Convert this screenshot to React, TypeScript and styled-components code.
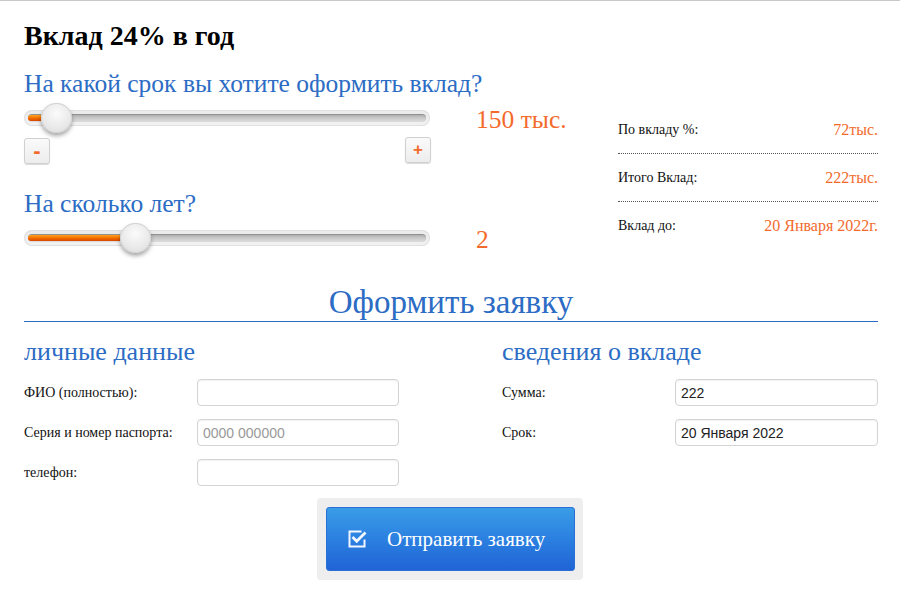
import React from "react";
import styled, { createGlobalStyle } from "styled-components";

const SERIF = `"Liberation Serif", "Times New Roman", serif`;
const SANS = `"Liberation Sans", Arial, sans-serif`;

const Global = createGlobalStyle`
  html, body { margin: 0; padding: 0; background: #fff; }
  body { font-family: ${SERIF}; color: #111; }
  * { box-sizing: border-box; }
`;

const BLUE = "#2c6cc4";
const ORANGE = "#f36a2c";

const Page = styled.div`
  width: 900px;
  height: 600px;
  border-top: 1px solid #c9c9c9;
  padding: 0 22px 0 24px;
  overflow: hidden;
`;

const Title = styled.h1`
  margin: 19px 0 0;
  font-size: 28px;
  line-height: 32px;
  font-weight: bold;
  color: #000;
`;

const Top = styled.div`
  display: flex;
  align-items: flex-start;
`;

const Calc = styled.div`
  flex: 1;
`;

const Question = styled.h2<{ $mt: number }>`
  margin: ${(p) => p.$mt}px 0 0;
  font-size: 25.5px;
  line-height: 30px;
  font-weight: normal;
  color: ${BLUE};
`;

const SliderRow = styled.div`
  display: flex;
  align-items: center;
  height: 34px;
  margin-top: 2px;
`;

const Track = styled.div`
  position: relative;
  width: 406px;
  height: 16px;
  border-radius: 8px;
  background: linear-gradient(#e9e9e9, #f3f3f3);
  box-shadow: inset 0 0 0 1px #e0e0e0;
`;

const Groove = styled.div`
  position: absolute;
  left: 4px;
  right: 4px;
  top: 4px;
  height: 8px;
  border-radius: 4px;
  background: linear-gradient(#adadad, #cdcdcd 60%, #dddddd);
  box-shadow: inset 0 1px 1px rgba(0, 0, 0, 0.2);
`;

const Fill = styled.div`
  position: absolute;
  left: 4px;
  top: 5px;
  height: 6px;
  border-radius: 3px;
  background: linear-gradient(#ffa51c, #f36a00 55%, #d64800);
`;

const Thumb = styled.div`
  position: absolute;
  top: -7px;
  width: 31px;
  height: 30px;
  margin-left: -15px;
  border-radius: 50%;
  background: radial-gradient(circle at 50% 35%, #fbfbfb, #e8e8e8 60%, #d8d8d8);
  box-shadow: 0 3px 4px rgba(0, 0, 0, 0.35), inset 0 0 0 1px #d2d2d2;
`;

const Value = styled.div`
  margin: 3px 0 0 46px;
  font-size: 25.5px;
  line-height: 30px;
  color: ${ORANGE};
`;

const StepRow = styled.div`
  display: flex;
  justify-content: space-between;
  width: 407px;
  margin-top: 3px;
`;

const StepButton = styled.button<{ $top: number; $size: number }>`
  width: 26px;
  height: 26px;
  margin-top: ${(p) => p.$top}px;
  padding: 0;
  border: 1px solid #d0d0d0;
  border-radius: 3px;
  background: linear-gradient(#fafafa, #ededed);
  box-shadow: 0 1px 1px rgba(0, 0, 0, 0.15);
  color: ${ORANGE};
  font-family: ${SANS};
  font-weight: bold;
  font-size: ${(p) => p.$size}px;
  line-height: 22px;
`;

const Summary = styled.div`
  width: 260px;
  margin-top: 54px;
`;

const SumRow = styled.div<{ $last?: boolean }>`
  display: flex;
  justify-content: space-between;
  align-items: center;
  height: 48px;
  border-bottom: ${(p) => (p.$last ? "none" : "1px dotted #555")};
`;

const SumLabel = styled.span`
  font-size: 14px;
  color: #111;
`;

const SumValue = styled.span`
  font-size: 16px;
  color: ${ORANGE};
`;

const ApplyTitle = styled.h2`
  margin: 28px 0 0;
  font-size: 33px;
  line-height: 38px;
  font-weight: normal;
  text-align: center;
  color: ${BLUE};
  border-bottom: 1px solid ${BLUE};
`;

const FormGrid = styled.div`
  display: grid;
  grid-template-columns: 375px 376px;
  column-gap: 103px;
  margin-top: 15px;
`;

const Column = styled.div``;

const SubTitle = styled.h3`
  margin: 0 0 12px;
  font-size: 26px;
  line-height: 30px;
  font-weight: normal;
  color: ${BLUE};
`;

const Field = styled.div`
  display: flex;
  align-items: center;
  height: 27px;
  margin-bottom: 13px;
`;

const Label = styled.label`
  width: 173px;
  flex: none;
  font-size: 14px;
`;

const Input = styled.input`
  flex: 1;
  min-width: 0;
  height: 27px;
  padding: 0 5px;
  border: 1px solid #d4d4d4;
  border-radius: 4px;
  box-shadow: inset 0 1px 2px rgba(0, 0, 0, 0.06);
  font-family: ${SANS};
  font-size: 14px;
  color: #222;
  outline: none;
  &::placeholder { color: #999; }
`;

const SubmitWrap = styled.div`
  display: flex;
  justify-content: center;
  margin: -1px 2px 0 0;
`;

const SubmitBox = styled.div`
  padding: 9px 8px 9px 9px;
  background: #eeeeee;
  border-radius: 4px;
`;

const Submit = styled.button`
  display: flex;
  align-items: center;
  gap: 20px;
  width: 249px;
  height: 64px;
  padding: 0 0 0 21px;
  border: 1px solid #2a6fd5;
  border-radius: 3px;
  background: linear-gradient(#3a9de8, #2b80e0 50%, #2064d6);
  color: #fff;
  font-family: ${SERIF};
  font-size: 21px;
`;

const CheckIcon = () => (
  <svg width="19" height="18" viewBox="0 0 19 18" fill="none">
    <path d="M13.5 1.5H1.5v15h15V9.5" stroke="#f2f6ff" strokeWidth="2" />
    <path d="M4.5 7l4.2 4.2L17.5 2.5" stroke="#f2f6ff" strokeWidth="2.8" />
  </svg>
);

type SliderProps = { fill: number; thumb: number; value: string };

const Slider = ({ fill, thumb, value }: SliderProps) => (
  <SliderRow>
    <Track>
      <Groove />
      <Fill style={{ width: fill }} />
      <Thumb style={{ left: thumb }} />
    </Track>
    <Value>{value}</Value>
  </SliderRow>
);

export default function App() {
  return (
    <>
      <Global />
      <Page>
        <Title>Вклад 24% в год</Title>
        <Top>
          <Calc>
            <Question $mt={17}>На какой срок вы хотите оформить вклад?</Question>
            <Slider fill={26} thumb={32} value="150 тыс." />
            <StepRow>
              <StepButton $top={0} $size={22}>-</StepButton>
              <StepButton $top={-1} $size={17}>+</StepButton>
            </StepRow>
            <Question $mt={25}>На сколько лет?</Question>
            <Slider fill={100} thumb={111} value="2" />
          </Calc>
          <Summary>
            <SumRow>
              <SumLabel>По вкладу %:</SumLabel>
              <SumValue>72тыс.</SumValue>
            </SumRow>
            <SumRow>
              <SumLabel>Итого Вклад:</SumLabel>
              <SumValue>222тыс.</SumValue>
            </SumRow>
            <SumRow $last>
              <SumLabel>Вклад до:</SumLabel>
              <SumValue>20 Января 2022г.</SumValue>
            </SumRow>
          </Summary>
        </Top>
        <ApplyTitle>Оформить заявку</ApplyTitle>
        <FormGrid>
          <Column>
            <SubTitle>личные данные</SubTitle>
            <Field>
              <Label>ФИО (полностью):</Label>
              <Input />
            </Field>
            <Field>
              <Label>Серия и номер паспорта:</Label>
              <Input placeholder="0000 000000" />
            </Field>
            <Field>
              <Label>телефон:</Label>
              <Input />
            </Field>
          </Column>
          <Column>
            <SubTitle>сведения о вкладе</SubTitle>
            <Field>
              <Label>Сумма:</Label>
              <Input defaultValue="222" />
            </Field>
            <Field>
              <Label>Срок:</Label>
              <Input defaultValue="20 Января 2022" />
            </Field>
          </Column>
        </FormGrid>
        <SubmitWrap>
          <SubmitBox>
            <Submit>
              <CheckIcon />
              Отправить заявку
            </Submit>
          </SubmitBox>
        </SubmitWrap>
      </Page>
    </>
  );
}
